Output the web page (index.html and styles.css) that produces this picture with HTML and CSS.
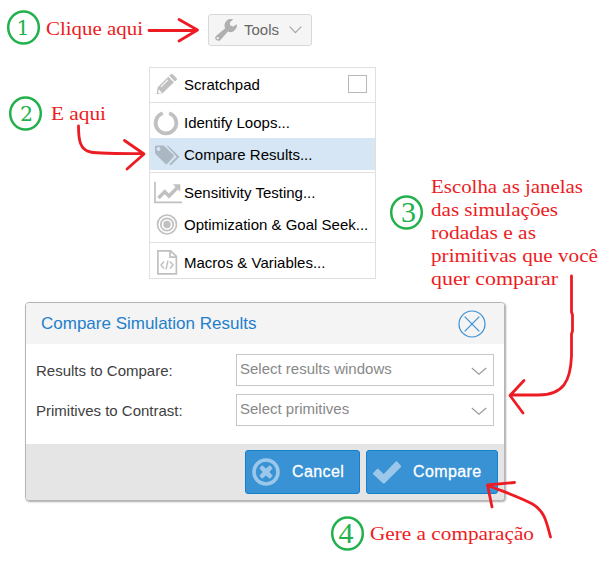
FILE: index.html
```html
<!DOCTYPE html>
<html lang="pt">
<head>
<meta charset="utf-8">
<title>Compare Simulation Results</title>
<link rel="stylesheet" href="styles.css">
</head>
<body>
<main class="page">
  <button class="tools">
    <svg class="wrench" width="22" height="22" viewBox="0 0 22 22"><path fill-rule="evenodd" d="M1 17 10.200 9.200A6.500 6.500 0 0 1 18.300 .3L14.800 3.400 15.300 6.500 18.200 7.500 21.800 5.300A6.500 6.500 0 0 1 13 12.600L5.200 21.200Q3.200 22.600 1.100 20.800-.8 19 1 17ZM3 18a1.100 1.100 0 1 0 .1 2.100 1.100 1.100 0 0 0-.1-2.100Z"/></svg>
    <span>Tools</span>
    <svg class="chevron" width="13" height="8" viewBox="0 0 13 8"><path d="m.7.7 5.700 6 5.900-6"/></svg>
  </button>

  <nav class="menu">
    <div class="item"><svg class="icon" viewBox="0 0 28 28"><path fill-rule="evenodd" d="M7.700 16.300 18.300 5.700 23.900 11.300 12.900 22 6.500 23.300ZM19.200 4.800l1.500-1.600q1-1 2 0l3.900 3.900q.9.900 0 1.900l-1.700 1.500ZM8.700 18.800l-.6 2.500 1 1 2.400-.6-.2-1.300-1.400-.1-.1-1.400ZM17.500 8.600l-7 7 .7.700 7-7Z"/></svg><span>Scratchpad</span><i class="check"></i></div>
    <hr>
    <div class="item"><svg class="icon" viewBox="0 0 28 28"><path class="loop" d="M19.200 4.200a10.300 10.300 0 1 1-6.400 0"/></svg><span>Identify Loops...</span></div>
    <div class="item active"><svg class="icon" viewBox="0 0 28 28"><path fill-rule="evenodd" d="M5 6q0-1.600 1.600-1.600h6.200q1 0 2 1l8.600 8.400q1 1 0 2.100l-6.100 6.900q-1 1-2 0L6 13.500q-1-1-1-2.500ZM8.500 6a2 2 0 1 0 .1 0Z"/><path d="M16.400 4.400q1.500 0 2.500 1l10.600 10.400-8.600 8.400-1.600-1 7.300-7.400Z"/></svg><span>Compare Results...</span></div>
    <hr>
    <div class="item"><svg class="icon" viewBox="0 0 28 28"><path class="axis" d="M5 2.800v20.500h27"/><path class="trend" d="m8.500 19 6.200-6.200 4.300 4.300 8.500-8.500"/><path d="M22.800 5.300h7.500v7.500Z"/></svg><span>Sensitivity Testing...</span></div>
    <div class="item"><svg class="icon" viewBox="0 0 28 28"><g class="target"><circle cx="17" cy="13.500" r="9.500"/><circle cx="17" cy="13.500" r="6.200"/></g><circle cx="17" cy="13.500" r="3.700"/></svg><span>Optimization &amp; Goal Seek...</span></div>
    <hr>
    <div class="item"><svg class="icon" viewBox="0 0 28 28"><path class="file" d="M7.900 1.900h12.700l5.800 5.500v17.500H7.900ZM20 1.900v6.200h6.400"/><path class="code" d="m14 12.500-3 3.500 3 3.500m6-7 3 3.500-3 3.500m-2-8-2 9"/></svg><span>Macros &amp; Variables...</span></div>
  </nav>

  <section class="dialog">
    <header>
      <h1>Compare Simulation Results</h1>
      <svg width="28" height="28" viewBox="0 0 28 28"><circle cx="14" cy="14" r="13"/><path d="m6.700 6.700 14.600 14.600m0-14.600L6.700 21.300"/></svg>
    </header>
    <div class="fields">
      <label>Results to Compare:</label>
      <div class="select"><span>Select results windows</span><svg width="16" height="9" viewBox="0 0 16 9"><path d="m.8 1 7.200 6.200L15.200 1"/></svg></div>
      <label>Primitives to Contrast:</label>
      <div class="select"><span>Select primitives</span><svg width="16" height="9" viewBox="0 0 16 9"><path d="m.8 1 7.200 6.200L15.200 1"/></svg></div>
    </div>
    <footer>
      <button class="action cancel"><svg width="28" height="28" viewBox="0 0 28 28"><circle class="ring" cx="14" cy="14" r="12"/><path d="m10.200 7.300 3.800 3.300 3.800-3.300 2.900 2.900-3.300 3.800 3.300 3.800-2.900 2.900-3.800-3.300-3.800 3.300-2.900-2.900 3.300-3.800-3.300-3.800Z"/></svg><span>Cancel</span></button>
      <button class="action compare"><svg width="28" height="28" viewBox="0 0 28 28"><path d="M0 15.200 4 11q.7-.6 1.400 0l5.300 4.900L22.800 3.600q.6-.6 1.300 0l4 4.200q.4.600 0 1.200L11.700 25.200q-.9.700-1.800 0L.2 16.300Q-.3 15.800 0 15.200Z"/></svg><span>Compare</span></button>
    </footer>
  </section>

  <svg class="notes" width="615" height="571" viewBox="0 0 615 571">
    <g class="rings">
      <ellipse cx="23.500" cy="27.500" rx="15.300" ry="16"/>
      <ellipse cx="25.500" cy="113.500" rx="15.300" ry="16"/>
      <ellipse cx="406.500" cy="212.500" rx="15.300" ry="16"/>
      <ellipse cx="347.500" cy="533.500" rx="15.300" ry="16"/>
    </g>
    <g class="small-digit"><text x="23" y="35">1</text><text x="26.500" y="121">2</text></g>
    <g class="tall-digit"><text x="408.500" y="222">3</text><text x="346" y="543">4</text></g>
    <g class="words">
      <text x="46" y="35" textLength="97" lengthAdjust="spacingAndGlyphs">Clique aqui</text>
      <text x="51" y="120" textLength="55" lengthAdjust="spacingAndGlyphs">E aqui</text>
      <text x="431" y="193" textLength="152" lengthAdjust="spacingAndGlyphs">Escolha as janelas</text>
      <text x="431" y="216" textLength="127" lengthAdjust="spacingAndGlyphs">das simulações</text>
      <text x="431" y="239" textLength="105" lengthAdjust="spacingAndGlyphs">rodadas e as</text>
      <text x="431" y="262" textLength="167" lengthAdjust="spacingAndGlyphs">primitivas que você</text>
      <text x="431" y="285" textLength="127" lengthAdjust="spacingAndGlyphs">quer comparar</text>
      <text x="370" y="540" textLength="164" lengthAdjust="spacingAndGlyphs">Gere a comparação</text>
    </g>
    <g class="arrows">
      <path d="M149 30.500h48M179 19.500l18.500 10.500L179 41"/>
      <path d="M78.500 126c0 14 1.500 24 12 26 8 1.700 30 1.700 53 1.700M124.500 140.500l19.500 13.500-17 15"/>
      <path d="M571.500 276v36l1 3v16l-1 3v22c-1 25-8 39-33 39h-28M524 380.500l-14 15 13 17.500"/>
      <path d="M550.500 537c-4-15-6-26-18-33-13-7-28-12-43-18M514.500 482.500l-27 2.500 4.500 22"/>
    </g>
  </svg>
</main>
</body>
</html>
```
FILE: styles.css
```css
* { box-sizing: border-box; }
body { margin: 0; background: #fff; font-family: "Liberation Sans", Arial, sans-serif; }
.page { position: relative; width: 615px; height: 571px; padding-top: 14px; overflow: hidden; }
button { font-family: inherit; padding: 0; margin: 0; }
svg { flex: none; display: block; }

.tools { display: flex; align-items: center; width: 104px; height: 32px; margin-left: 208px; padding-left: 6px; border: 1px solid #d8d8d8; border-radius: 3px; background: #f5f5f5; color: #666; font-size: 15px; }
.tools span { margin-top: -2px; }
.wrench { fill: #b0b0b0; margin-right: 7px; }
.tools .chevron { margin-left: 10px; fill: none; stroke: #a5a5a5; stroke-width: 1.2; }

.menu { width: 227px; margin: 21px 0 0 149px; border: 1px solid #e0e0e0; background: #fff; color: #000; }
.item { display: flex; align-items: center; height: 32px; padding: 0 8px 0 0; font-size: 15px; white-space: nowrap; }
.item.active { background: #d6e6f4; }
.item.active .icon { fill: #abb8c3; }
.icon { width: 28px; height: 28px; margin: 2px 6px 0 0; overflow: visible; fill: #c0c0c0; }
.loop { fill: none; stroke: #c0c0c0; stroke-width: 3.800; }
.axis { fill: none; stroke: #c0c0c0; stroke-width: 1.700; }
.trend { fill: none; stroke: #c0c0c0; stroke-width: 3.500; }
.target { fill: none; stroke: #c0c0c0; stroke-width: 1.700; }
.file { fill: none; stroke: #c0c0c0; stroke-width: 1.700; }
.code { fill: none; stroke: #c0c0c0; stroke-width: 1.400; }
.check { width: 19px; height: 18px; margin: 0 0 0 auto; border: 1px solid #b8b8b8; }
.menu hr { height: 1px; margin: 2px 0 3px; border: 0; background: #e0e0e0; }

.dialog { width: 480px; height: 199px; margin: 23px 0 0 25px; border: 1px solid #b5b5b5; border-radius: 4px; overflow: hidden; box-shadow: 1px 1px 2px #aaa; background: #fff; }
.dialog header { display: flex; align-items: center; justify-content: space-between; height: 41px; padding: 0 18px 0 15px; background: #f4f4f4; }
.dialog h1 { margin: 0; color: #1e80cc; font-size: 17px; font-weight: 400; }
.dialog header svg { fill: none; stroke: #3990d2; stroke-width: 1.200; }
.fields { display: grid; grid-template-columns: 200px 258px; grid-auto-rows: 32px; row-gap: 8px; height: 100px; padding: 10px 0 0 10px; }
.fields label { padding-top: 8px; color: #404040; font-size: 15px; }
.select { display: flex; justify-content: space-between; padding: 5px 6px 0 3px; border: 1px solid #c6c6c6; color: #888; font-size: 15px; }
.select svg { margin-top: 7px; fill: none; stroke: #999; stroke-width: 1.100; }
.dialog footer { display: flex; justify-content: flex-end; gap: 6px; height: 57px; padding: 6px 6px 0 0; background: #e5e5e5; }
.action { display: flex; align-items: center; height: 44px; padding: 0 0 1px 6px; border: 1px solid #157fcc; border-radius: 3px; background: #3892d4; color: #fff; font-size: 16px; letter-spacing: .4px; -webkit-text-stroke: .3px #fff; }
.action svg { margin-right: 12px; fill: #9bc8ea; }
.ring { fill: none; stroke: #9bc8ea; stroke-width: 3.600; }
.cancel { width: 115px; }
.compare { width: 132px; }

.notes { position: absolute; inset: 0; }
.rings { fill: none; stroke: #22b14c; stroke-width: 2.500; }
.small-digit, .tall-digit { fill: #22b14c; text-anchor: middle; }
.small-digit { font: 20.500px "DejaVu Serif", serif; }
.tall-digit { font: 30px "Liberation Serif", serif; }
.words { fill: #ed1c24; font: 19px "Liberation Serif", Georgia, serif; }
.arrows { fill: none; stroke: #ed1c24; stroke-width: 2.800; stroke-linejoin: round; stroke-linecap: round; }
```
